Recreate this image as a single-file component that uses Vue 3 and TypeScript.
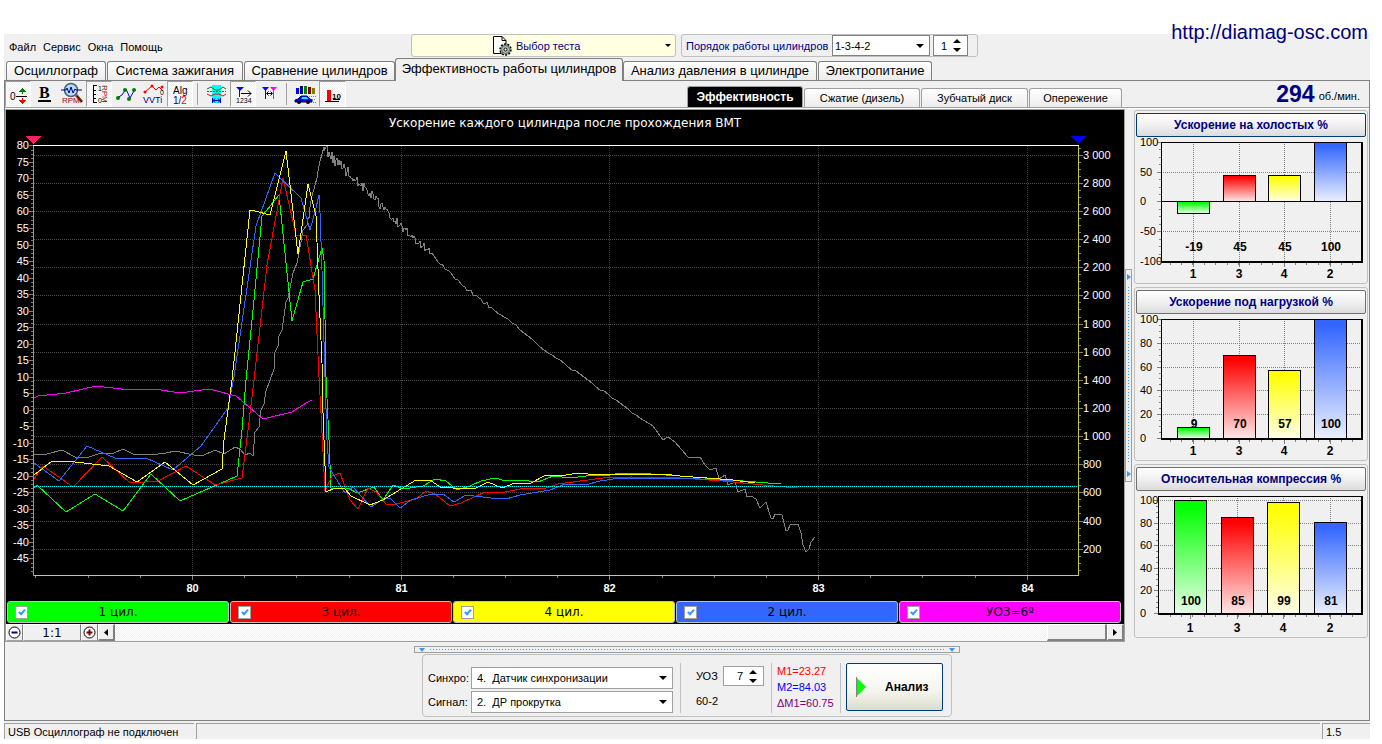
<script setup lang="ts">
import { ref, computed } from 'vue'

type Point = [number, number]

interface Bar { label: string; value: number; color: string; x: number }
interface BarPanel {
  id: string
  title: string
  focused: boolean
  min: number
  max: number
  step: number
  left: number
  bottom: number
  top: number
  bars: Bar[]
}

const menu = ['Файл', 'Сервис', 'Окна', 'Помощь']

const tabs = [
  { name: 'Осциллограф', width: 100 },
  { name: 'Система зажигания', width: 136 },
  { name: 'Сравнение цилиндров', width: 151 },
  { name: 'Эффективность работы цилиндров', width: 228 },
  { name: 'Анализ давления в цилиндре', width: 194 },
  { name: 'Электропитание', width: 114 },
]
const activeTab = ref(3)

const views = [
  { name: 'Эффективность', width: 116 },
  { name: 'Сжатие (дизель)', width: 116 },
  { name: 'Зубчатый диск', width: 107 },
  { name: 'Опережение', width: 93 },
]
const activeView = ref(0)

const firingOrder = ref('1-3-4-2')
const cylinder = ref(1)
const advance = ref(7)
const sync = ref(4)
const signal = ref(2)

const channels = ref([
  { name: '1 цил.', color: 'green', on: true },
  { name: '3 цил.', color: 'red', on: true },
  { name: '4 цил.', color: 'yellow', on: true },
  { name: '2 цил.', color: 'blue', on: true },
  { name: 'УОЗ=6º', color: 'magenta', on: true },
])

/* Main chart axes */
const leftY = (v: number) => Math.round(145.4 + (80 - v) * 3.304) + 0.5
const rightY = (v: number) => Math.round(154.7 + (3000 - v) * 0.1407) + 0.5
const timeX = (t: number) => Math.round(192 + (t - 80) * 208.7) + 0.5

const leftTicks = Array.from({ length: 26 }, (_, i) => 80 - i * 5)
const leftMinor = Array.from({ length: 104 }, (_, i) => 80 - i * 1.25)
const rightTicks = Array.from({ length: 15 }, (_, i) => 3000 - i * 200)
const rightMinor = Array.from({ length: 61 }, (_, i) => 3050 - i * 50)
const timeTicks = [80, 81, 82, 83, 84]
const timeMinor = Array.from({ length: 20 }, (_, i) => 79.25 + i * 0.25)
const thousands = (v: number) => (v >= 1000 ? `${Math.floor(v / 1000)} ${String(v % 1000).padStart(3, '0')}` : String(v))

const path = (pts: Point[]) => pts.map((p) => p.join(',')).join(' ')

const rise: Point[] = [
  [34, 454], [47, 454], [62, 450], [75, 457], [89, 457], [98, 454], [114, 453], [123, 449], [133, 454], [150, 455],
  [166, 453], [175, 451], [194, 455], [202, 456], [215, 450], [224, 454], [235, 447], [240, 449], [245, 455],
  [250, 453], [253, 456], [255, 432], [259, 427], [261, 410], [264, 404], [266, 391], [270, 380], [274, 369],
  [275, 352], [278, 346], [279, 336], [282, 330], [286, 302], [288, 298], [293, 273], [297, 263], [301, 242],
  [303, 230], [307, 225], [307, 219], [310, 217], [309, 212], [312, 196], [317, 178], [318, 171], [320, 161], [324, 147],
]
const slope: Point[] = [
  [324, 148], [333, 158], [348, 172], [362, 185], [382, 207], [402, 227], [425, 248], [445, 267], [455, 279],
  [477, 297], [500, 314], [520, 329], [540, 347], [560, 361], [580, 374], [600, 389], [620, 403], [640, 418],
]
const tail: Point[] = [
  [640, 418], [653, 426], [663, 440], [668, 437], [675, 442], [688, 457], [695, 458], [700, 457], [705, 465],
  [710, 470], [716, 468], [719, 479], [725, 475], [728, 485], [735, 482], [738, 492], [745, 489], [747, 497],
  [751, 496], [756, 499], [760, 508], [766, 502], [771, 518], [773, 519], [775, 514], [782, 515], [786, 531],
  [788, 530], [790, 525], [798, 524], [801, 533], [803, 545], [806, 552], [809, 549], [811, 542], [815, 537],
]

/* Adds measurement ripple to the coasting-down part of the speed curve */
function ripple(base: Point[]): Point[] {
  const out: Point[] = []
  let seed = 17
  for (let i = 0; i < base.length - 1; i++) {
    const [x0, y0] = base[i]
    const [x1, y1] = base[i + 1]
    let x = x0
    while (x < x1) {
      seed = (seed * 1103515245 + 12345) % 2147483648
      const noise = (seed / 2147483648 - 0.5) * 2
      const amp = x < 352 ? 6 : x < 385 ? 5 : x < 430 ? 4 : x < 490 ? 2 : 1
      out.push([x, Math.round(y0 + ((y1 - y0) * (x - x0)) / (x1 - x0) + noise * amp)])
      x += x < 430 ? 1 : x < 490 ? 2 : 4
    }
  }
  return out
}

const speed: Point[] = [...rise, ...ripple(slope), ...tail]

const series = computed(() => [
  { id: 'speed', color: 'gray', on: true, pts: speed },
  { id: 'c1', color: 'green', on: channels.value[0].on, pts: [
    [34, 488], [37, 485], [66, 512], [95, 494], [123, 511], [151, 474], [180, 501], [212, 487], [237, 476], [242, 430],
    [246, 380], [254, 300], [262, 216], [279, 195], [292, 321], [303, 282], [313, 279], [319, 258], [322, 248],
    [324, 260], [326, 377], [329, 440], [331, 488], [338, 488], [348, 488], [357, 493], [374, 487], [383, 500],
    [393, 485], [403, 489], [423, 486], [435, 479], [446, 481], [457, 490], [470, 486], [481, 481], [495, 478],
    [506, 481], [520, 480], [538, 482], [553, 476], [570, 478], [586, 476], [610, 475], [621, 473], [636, 473],
    [680, 476], [730, 480], [781, 484],
  ] as Point[] },
  { id: 'c3', color: 'red', on: channels.value[1].on, pts: [
    [34, 479], [43, 466], [73, 487], [102, 457], [130, 483], [158, 481], [186, 466], [215, 485], [242, 478],
    [248, 430], [254, 380], [267, 265], [283, 178], [296, 235], [306, 235], [315, 290], [319, 377], [321, 413],
    [325, 491], [332, 476], [340, 473], [350, 500], [358, 509], [368, 488], [376, 492], [386, 504], [396, 504],
    [416, 499], [426, 491], [435, 494], [450, 506], [461, 503], [485, 492], [500, 493], [520, 489], [546, 488],
    [558, 484], [603, 478], [631, 477], [680, 478], [723, 481], [763, 485], [797, 488],
  ] as Point[] },
  { id: 'c2', color: 'blue', on: channels.value[3].on, pts: [
    [34, 463], [59, 481], [87, 446], [115, 458], [146, 458], [173, 470], [201, 446], [228, 408], [234, 377],
    [256, 226], [275, 173], [301, 198], [310, 230], [316, 208], [319, 195], [320, 213], [322, 270], [325, 377],
    [327, 440], [329, 467], [333, 474], [345, 493], [353, 487], [371, 507], [383, 499], [390, 498], [400, 508],
    [411, 500], [431, 494], [443, 494], [454, 502], [466, 495], [491, 498], [506, 499], [520, 495], [550, 490],
    [565, 484], [585, 485], [600, 481], [620, 478], [680, 478], [720, 480], [737, 481],
  ] as Point[] },
  { id: 'c4', color: 'yellow', on: channels.value[2].on, pts: [
    [34, 475], [52, 461], [75, 462], [109, 466], [137, 482], [165, 462], [193, 485], [222, 469], [224, 440],
    [228, 410], [232, 380], [250, 210], [255, 211], [270, 215], [286, 151], [298, 254], [308, 184], [316, 216],
    [319, 295], [322, 363], [323, 413], [326, 492], [335, 488], [345, 489], [351, 496], [370, 505], [383, 500],
    [401, 489], [416, 480], [430, 480], [440, 487], [466, 489], [476, 488], [488, 482], [502, 488], [515, 483],
    [531, 483], [544, 476], [566, 475], [578, 473], [588, 474], [663, 474], [680, 476], [733, 480], [755, 483],
  ] as Point[] },
  { id: 'adv', color: 'magenta', on: channels.value[4].on, pts: [
    [34, 398], [38, 396], [66, 393], [96, 386], [121, 389], [155, 389], [180, 393], [209, 389], [236, 396],
    [263, 419], [292, 412], [306, 403], [312, 400],
  ] as Point[] },
].filter((s) => s.on))

/* Bar panels */
const order = ['1', '3', '4', '2']
const palette = ['green', 'red', 'yellow', 'blue']
const makeBars = (values: number[], xs: number[]): Bar[] =>
  values.map((value, i) => ({ label: order[i], value, color: palette[i], x: xs[i] }))

const panels: BarPanel[] = [
  { id: 'idle', title: 'Ускорение на холостых %', focused: true, min: -100, max: 100, step: 50, left: 25, top: 5, bottom: 124, bars: makeBars([-19, 45, 45, 100], [41, 87, 132, 178]) },
  { id: 'load', title: 'Ускорение под нагрузкой %', focused: false, min: 0, max: 100, step: 20, left: 25, top: 5, bottom: 124, bars: makeBars([9, 70, 57, 100], [41, 87, 132, 178]) },
  { id: 'comp', title: 'Относительная компрессия %', focused: false, min: 0, max: 104, step: 20, left: 22, top: 5, bottom: 122, bars: makeBars([100, 85, 99, 81], [38, 85, 131, 178]) },
]
const barY = (p: BarPanel, v: number) => Math.round(p.bottom - ((v - p.min) / (p.max - p.min)) * (p.bottom - p.top) - 0.01)
const barTicks = (p: BarPanel, div = 1) => {
  const out: number[] = []
  for (let v = p.min; v <= p.max; v += p.step / div) out.push(v)
  return out
}
const barTop = (p: BarPanel, b: Bar) => barY(p, Math.max(b.value, 0))
const barHeight = (p: BarPanel, b: Bar) => Math.abs(barY(p, 0) - barY(p, b.value))
const catTicks = Array.from({ length: 17 }, (_, i) => 34 + i * 11.4)
</script>

<template>
  <div class="screen">
    <div class="window">
      <a class="site" href="#">http://diamag-osc.com</a>

      <header class="top">
        <nav class="menu">
          <button v-for="m in menu" :key="m" type="button">{{ m }}</button>
        </nav>
        <button class="test-pick" type="button">
          <svg class="doc" width="20" height="20" viewBox="0 0 20 20">
            <path d="M1.500 .5H10l4 4V17.500H1.500z" fill="#fff" stroke="#000" />
            <path d="M10 .5v4h4" fill="none" stroke="#000" />
            <circle cx="13.500" cy="13.500" r="5.500" fill="#b4c4b4" stroke="#000" stroke-width="1.500" stroke-dasharray="2 1.400" />
            <circle cx="13.500" cy="13.500" r="4" fill="#b4c4b4" stroke="#506050" />
            <circle cx="13.500" cy="13.500" r="1.500" fill="#fff" stroke="#000" />
          </svg>
          <span>Выбор теста</span>
          <svg class="drop" width="6" height="3" viewBox="0 0 6 3"><path d="M0 0h6L3 3z" /></svg>
        </button>
        <div class="order">
          <label for="order">Порядок работы цилиндров</label>
          <span class="combo combo-order">
            <select id="order" v-model="firingOrder"><option>1-3-4-2</option><option>1-2-4-3</option></select>
            <svg width="8" height="4" viewBox="0 0 8 4"><path d="M0 0h8L4 4z" /></svg>
          </span>
          <span class="spin spin-cyl">
            <input v-model.number="cylinder" type="text" aria-label="Цилиндр" />
            <span class="arrows">
              <button type="button" aria-label="Больше" @click="cylinder++"><svg width="8" height="4" viewBox="0 0 8 4"><path d="M0 4h8L4 0z" /></svg></button>
              <button type="button" aria-label="Меньше" @click="cylinder--"><svg width="8" height="4" viewBox="0 0 8 4"><path d="M0 0h8L4 4z" /></svg></button>
            </span>
          </span>
        </div>
      </header>

      <nav class="tabs">
        <button v-for="(t, i) in tabs" :key="t.name" type="button" :class="{ active: i === activeTab }" :style="{ width: t.width + 'px' }" @click="activeTab = i">{{ t.name }}</button>
      </nav>

      <main class="page">
        <div class="toolbar">
          <div class="tools">
            <button type="button" class="tool w26 down" aria-label="Ноль">
              <svg width="24" height="24" viewBox="0 0 24 24" shape-rendering="crispEdges">
                <text class="t10" x="4" y="18">0</text>
                <path d="M10 14.500h11" stroke="#000" />
                <path d="M16.500 12v-3" stroke="#008000" /><path d="M13 10h7l-3.500-4z" fill="#008000" />
                <path d="M16.500 16v3" stroke="#f00" /><path d="M13 18h7l-3.500 4z" fill="#f00" />
              </svg>
            </button>
            <button type="button" class="tool w27" aria-label="Жирный">
              <svg width="24" height="24" viewBox="0 0 24 24">
                <text class="serif-b" x="6" y="16">B</text>
                <path d="M5 18h13v2H5z" />
              </svg>
            </button>
            <button type="button" class="tool w28" aria-label="Обороты, лупа">
              <svg width="24" height="24" viewBox="0 0 24 24">
                <path d="M16 13l6 7" stroke="#8a4b20" stroke-width="3" />
                <path d="M17 14l5 6" stroke="#000" />
                <circle cx="11" cy="8" r="6.500" fill="#b0dcff" stroke="#506070" stroke-width="1.500" />
                <path d="M1 8h5l1-2 2 5 2-6 2 6 2-4 1 1h6" fill="none" stroke="#000080" />
                <text class="t8 dred" x="2" y="21">RPM</text>
              </svg>
            </button>
            <button type="button" class="tool w26 down" aria-label="Шкала оборотов">
              <svg width="24" height="24" viewBox="0 0 24 24">
                <path d="M10 3.500H6.500v17H10M6.500 8H9M6.500 12H9M6.500 16H9" fill="none" stroke="#000" shape-rendering="crispEdges" />
                <text class="t7" x="11" y="9">1</text>
                <text class="t7" x="11" y="21">0</text>
                <text class="t8 dred" transform="translate(15 3) rotate(90)">RPM</text>
              </svg>
            </button>
            <button type="button" class="tool w28" aria-label="Линии">
              <svg width="24" height="24" viewBox="0 0 24 24">
                <path d="M3 16l5-3 4-6 4 9 5-9" fill="none" stroke="#0000e0" />
                <g fill="#008000"><circle cx="4" cy="16" r="2" /><circle cx="11" cy="8" r="2" /><circle cx="15" cy="17" r="2" /><circle cx="20" cy="8" r="2" /></g>
              </svg>
            </button>
            <button type="button" class="tool w27" aria-label="VVTi">
              <svg width="24" height="24" viewBox="0 0 24 24">
                <path d="M3 10l7-6 4 4 3-3 4 4" fill="none" stroke="#f00" />
                <g fill="#f00"><circle cx="3" cy="10" r="1.500" /><circle cx="10" cy="4" r="1.500" /><circle cx="20" cy="5" r="1.500" /></g>
                <text class="t7" x="18" y="13">0</text>
                <text class="t9 navy" x="1" y="21">VVTi</text>
              </svg>
            </button>
            <button type="button" class="tool w26 down" aria-label="Алгоритм 1/2">
              <svg width="24" height="24" viewBox="0 0 24 24">
                <text class="t10" x="5" y="12">Alg</text>
                <text class="t10" x="5" y="22"><tspan fill="#000080">1/</tspan><tspan fill="#ff0000">2</tspan></text>
              </svg>
            </button>
            <i class="tool-sep"></i>
            <button type="button" class="tool w28" aria-label="Сигналы">
              <svg width="24" height="24" viewBox="0 0 24 24">
                <path d="M8 3h9v18H8z" fill="#00ffff" />
                <path d="M3 7l4-2 4 3h4l4-3 3 2" fill="none" stroke="#008000" />
                <path d="M3 9.500h19" stroke="#008000" stroke-dasharray="2 1" />
                <path d="M3 12l4 2 4-2h4l4 2 3-2" fill="none" stroke="#f00" />
                <path d="M8.500 16v5M16.500 16v5M9 18.500h8M11 16.500l-2 2 2 2M14 16.500l2 2-2 2" fill="none" stroke="#0000c0" />
              </svg>
            </button>
            <button type="button" class="tool w26 down" aria-label="Маркеры 1234">
              <svg width="24" height="24" viewBox="0 0 24 24">
                <path d="M5 5h8L9 9z" fill="#00f" /><path d="M8.500 7v8" stroke="#00f" />
                <path d="M10 11.500h10M17 8.500l3 3-3 3" fill="none" stroke="#000" />
                <text class="t7" x="5" y="21">1234</text>
              </svg>
            </button>
            <button type="button" class="tool w26" aria-label="Интервал">
              <svg width="24" height="24" viewBox="0 0 24 24">
                <path d="M5 5h7L8.500 9z" fill="#00f" /><path d="M8.500 7v10" stroke="#00f" />
                <path d="M13 5h7l-3.500 4z" fill="#f0f" /><path d="M16.500 7v10" stroke="#f0f" />
                <path d="M10 11.500h5M11.500 9.500l-2 2 2 2M13.500 9.500l2 2-2 2" fill="none" stroke="#000" />
              </svg>
            </button>
            <i class="tool-sep"></i>
            <button type="button" class="tool w28" aria-label="Динамика">
              <svg width="24" height="24" viewBox="0 0 24 24">
                <g shape-rendering="crispEdges"><path d="M3 6h3v6H3z" fill="#00f" /><path d="M7 4h3v8H7z" fill="#000080" /><path d="M11 4h3v8h-3z" fill="#008000" /><path d="M15 5h3v7h-3z" fill="#800000" /><path d="M19 6h3v6h-3z" fill="#808000" /></g>
                <path d="M2 18l3-1 3-3h6l3 3 2 1v2H2z" fill="#00f" stroke="#000080" />
                <path d="M8 17l1.500-2h4l2 2z" fill="#00ffff" />
                <circle cx="6" cy="20" r="2" fill="#000" /><circle cx="15" cy="20" r="2" fill="#000" />
                <path d="M16 14.500h7M19 17.500h4M20 20.500h3" stroke="#808080" stroke-dasharray="1 1" />
              </svg>
            </button>
            <button type="button" class="tool w27 down" aria-label="Гистограмма">
              <svg width="24" height="24" viewBox="0 0 24 24" shape-rendering="crispEdges">
                <path d="M6 8h4v11H6z" fill="#f00" />
                <path d="M4 19.500h14M12 17.500h7" stroke="#000" />
                <text class="t8 bold" x="11" y="17">10</text>
              </svg>
            </button>
            <nav class="views">
              <button v-for="(v, i) in views" :key="v.name" type="button" :class="{ active: i === activeView }" :style="{ width: v.width + 'px' }" @click="activeView = i">{{ v.name }}</button>
            </nav>
          </div>
          <div class="rpm"><b>294</b><span>об./мин.</span></div>
        </div>

        <div class="work">
          <section class="scope">
            <svg class="plot" viewBox="6 110 1118 490">
              <text class="title" x="565" y="127" text-anchor="middle">Ускорение каждого цилиндра после прохождения ВМТ</text>
              <g class="grid" shape-rendering="crispEdges">
                <line v-for="v in rightTicks" :key="'h' + v" x1="34" x2="1078" :y1="rightY(v)" :y2="rightY(v)" />
                <line v-for="t in timeTicks" :key="'v' + t" class="vert" y1="146" y2="575" :x1="timeX(t)" :x2="timeX(t)" />
              </g>
              <g class="curves" shape-rendering="crispEdges">
                <polyline v-for="s in series" :key="s.id" :class="'line-' + s.color" :points="path(s.pts)" />
                <path class="level" d="M34 486.500H1078" />
              </g>
              <g shape-rendering="crispEdges">
                <g class="ticks">
                  <line v-for="v in leftTicks" :key="'l' + v" x1="29" x2="33" :y1="leftY(v)" :y2="leftY(v)" />
                  <line v-for="v in leftMinor" :key="'lm' + v" x1="31" x2="33" :y1="leftY(v)" :y2="leftY(v)" />
                  <line v-for="v in rightTicks" :key="'r' + v" x1="1079" x2="1083" :y1="rightY(v)" :y2="rightY(v)" />
                  <line v-for="v in rightMinor" :key="'rm' + v" x1="1079" x2="1081" :y1="rightY(v)" :y2="rightY(v)" />
                  <line v-for="t in timeTicks" :key="'t' + t" y1="576" y2="580" :x1="timeX(t)" :x2="timeX(t)" />
                  <line v-for="t in timeMinor" :key="'tm' + t" y1="576" y2="578" :x1="timeX(t)" :x2="timeX(t)" />
                </g>
                <path d="M33 145.500H1079" stroke="#fff" />
                <path d="M33 575.500H1079" stroke="#c0c0c0" />
                <path d="M33.500 146V576" stroke="#40c890" />
                <path d="M1078.500 146V576" stroke="#c8c840" />
                <path d="M25 136h16l-8 8z" fill="#ff2060" />
                <path d="M1070 136h16l-8 8z" fill="#0000ff" />
              </g>
              <g class="axis">
                <text v-for="v in leftTicks" :key="v" x="29" :y="leftY(v) + 3" text-anchor="end">{{ v }}</text>
                <text v-for="v in rightTicks" :key="'x' + v" x="1083" :y="rightY(v) + 3">{{ thousands(v) }}</text>
              </g>
              <g class="axis bold">
                <text v-for="t in timeTicks" :key="t" :x="timeX(t)" y="592" text-anchor="middle">{{ t }}</text>
              </g>
            </svg>

            <div class="legend">
              <label v-for="c in channels" :key="c.name" :class="'bg-' + c.color">
                <input v-model="c.on" type="checkbox" />
                <span>{{ c.name }}</span>
              </label>
            </div>

            <div class="scroll">
              <button type="button" class="sb" aria-label="Уменьшить"><svg width="13" height="13" viewBox="0 0 13 13"><circle cx="6.500" cy="6.500" r="5.500" fill="#fff" stroke="#000" /><path d="M3.500 6.500h6" stroke="#000080" stroke-width="2" /></svg></button>
              <button type="button" class="ratio">1:1</button>
              <button type="button" class="sb" aria-label="Увеличить"><svg width="13" height="13" viewBox="0 0 13 13"><circle cx="6.500" cy="6.500" r="5.500" fill="#fff" stroke="#000" /><path d="M3.500 6.500h6M6.500 3.500v6" stroke="#800000" stroke-width="2" /></svg></button>
              <button type="button" class="sb raised" aria-label="Влево"><svg width="4" height="7" viewBox="0 0 4 7"><path d="M4 0v7L0 3.500z" /></svg></button>
              <div class="track"><div class="thumb"></div></div>
              <button type="button" class="sb raised" aria-label="Вправо"><svg width="4" height="7" viewBox="0 0 4 7"><path d="M0 0v7l4-3.500z" /></svg></button>
            </div>
          </section>

          <div class="vsplit">
            <svg width="4" height="6" viewBox="0 0 4 6"><path d="M0 0v6l4-3z" /></svg>
            <i></i>
            <svg width="4" height="6" viewBox="0 0 4 6"><path d="M0 0v6l4-3z" /></svg>
          </div>

          <aside class="panels">
            <section v-for="p in panels" :key="p.id" class="panel">
              <button type="button" :class="{ focused: p.focused }">{{ p.title }}</button>
              <svg viewBox="0 0 230 146">
                <defs>
                  <linearGradient v-for="b in p.bars" :id="p.id + b.color" :key="b.color" x1="0" y1="0" x2="0" y2="1">
                    <stop offset="0.050" :class="'stop-' + b.color" />
                    <stop offset="1" :class="'stop-end-' + b.color" />
                  </linearGradient>
                </defs>
                <g shape-rendering="crispEdges">
                  <g class="bar-grid">
                    <line v-for="v in barTicks(p)" :key="v" :x1="p.left" x2="226" :y1="barY(p, v) + 0.5" :y2="barY(p, v) + 0.5" />
                    <line v-for="b in p.bars" :key="b.label" :x1="b.x + 16.5" :x2="b.x + 16.5" :y1="p.top" :y2="p.bottom" />
                  </g>
                  <g class="bar-ticks">
                    <line v-for="v in barTicks(p)" :key="v" :x1="p.left - 4" :x2="p.left" :y1="barY(p, v) + 0.5" :y2="barY(p, v) + 0.5" />
                    <line v-for="v in barTicks(p, 4)" :key="'m' + v" :x1="p.left - 2" :x2="p.left" :y1="barY(p, v) + 0.5" :y2="barY(p, v) + 0.5" />
                    <line v-for="x in catTicks" :key="'c' + x" :x1="x" :x2="x" :y1="p.bottom + 2" :y2="p.bottom + 4" />
                    <line v-for="b in p.bars" :key="'b' + b.label" :x1="b.x + 16.5" :x2="b.x + 16.5" :y1="p.bottom + 2" :y2="p.bottom + 6" />
                  </g>
                  <line :x1="p.left" x2="226" :y1="barY(p, 0) + 0.5" :y2="barY(p, 0) + 0.5" stroke="#000" />
                  <rect v-for="b in p.bars" :key="b.label" :x="b.x + 0.5" :y="barTop(p, b) + 0.5" width="32" :height="barHeight(p, b)" :fill="`url(#${p.id}${b.color})`" stroke="#000" />
                  <path :d="`M${p.left} ${p.top + 0.5}H226`" stroke="#000" />
                  <path :d="`M${p.left + 0.5} ${p.top}V${p.bottom}`" stroke="#000" />
                  <path :d="`M226 ${p.top}V${p.bottom + 2}M${p.left} ${p.bottom + 1}H226`" stroke="#000" stroke-width="2" />
                </g>
                <g class="bar-axis">
                  <text v-for="v in barTicks(p)" :key="v" x="4" :y="barY(p, v) + 4">{{ v }}</text>
                </g>
                <g class="bar-values">
                  <text v-for="b in p.bars" :key="b.label" :x="b.x + 17" y="114">{{ b.value }}</text>
                  <text v-for="b in p.bars" :key="'l' + b.label" :x="b.x + 16" y="141">{{ b.label }}</text>
                </g>
              </svg>
            </section>
          </aside>
        </div>

        <div class="hsplit">
          <svg width="6" height="4" viewBox="0 0 6 4"><path d="M0 0h6L3 4z" /></svg>
          <i></i>
          <svg width="6" height="4" viewBox="0 0 6 4"><path d="M0 0h6L3 4z" /></svg>
        </div>

        <form class="controls" @submit.prevent>
          <div class="fields">
            <label for="sync">Синхро:</label>
            <span class="combo">
              <select id="sync" v-model="sync"><option :value="4">4.&nbsp; Датчик синхронизации</option></select>
              <svg width="8" height="4" viewBox="0 0 8 4"><path d="M0 0h8L4 4z" /></svg>
            </span>
            <label for="signal">Сигнал:</label>
            <span class="combo">
              <select id="signal" v-model="signal"><option :value="2">2.&nbsp; ДР прокрутка</option></select>
              <svg width="8" height="4" viewBox="0 0 8 4"><path d="M0 0h8L4 4z" /></svg>
            </span>
          </div>
          <i class="rule"></i>
          <div class="advance">
            <div class="advance-row">
              <label for="advance">УОЗ</label>
              <span class="spin">
                <input id="advance" v-model.number="advance" type="text" />
                <span class="arrows">
                  <button type="button" aria-label="Больше" @click="advance++"><svg width="8" height="4" viewBox="0 0 8 4"><path d="M0 4h8L4 0z" /></svg></button>
                  <button type="button" aria-label="Меньше" @click="advance--"><svg width="8" height="4" viewBox="0 0 8 4"><path d="M0 0h8L4 4z" /></svg></button>
                </span>
              </span>
            </div>
            <span>60-2</span>
          </div>
          <i class="rule"></i>
          <div class="marks">
            <span class="m-red">M1=23.27</span>
            <span class="m-blue">M2=84.03</span>
            <span class="m-purple">ΔM1=60.75</span>
          </div>
          <i class="rule"></i>
          <button class="analyze" type="submit">
            <svg width="11" height="20" viewBox="0 0 11 20"><path d="M1 1l9 9-9 9z" fill="#00ff00" /><path d="M.5 0v20" stroke="#808080" /></svg>
            <span>Анализ</span>
          </button>
        </form>
      </main>

      <footer class="status">
        <span class="s-main">USB Осциллограф не подключен</span>
        <span class="s-mid"></span>
        <span class="s-ver">1.5</span>
      </footer>
    </div>
  </div>
</template>

<style>
body {
  background: #fff;
}
</style>

<style scoped>
.screen {
  padding: 34px 12px 5px 4px;
  font-family: "Liberation Sans", Arial, sans-serif;
  font-size: 11px;
  color: #000;
}
.screen *,
.screen *::before {
  box-sizing: border-box;
}
button,
input,
select {
  font: inherit;
  color: inherit;
  margin: 0;
  padding: 0;
  border: 0;
  background: none;
  border-radius: 0;
}
svg {
  display: block;
}
.window {
  position: relative;
  background: #f0f0f0;
}
.site {
  position: absolute;
  top: -14px;
  right: 2px;
  font-size: 20px;
  line-height: 24px;
  color: #000080;
  text-decoration: none;
}

/* header */
.top {
  display: flex;
  height: 24px;
}
.menu {
  flex: 0 0 407px;
  display: flex;
  gap: 7px;
  padding: 2px 0 0 5px;
  align-items: center;
}
.test-pick {
  flex: 0 0 265px;
  height: 23px;
  display: flex;
  align-items: center;
  border: 1px solid #c0c0c0;
  border-radius: 3px;
  background: #ffffe1;
  color: #000080;
  padding: 0 4px 0 80px;
  gap: 4px;
}
.drop {
  margin-left: auto;
}
.order {
  height: 23px;
  margin-left: 5px;
  width: 297px;
  display: flex;
  align-items: center;
  border: 1px solid #c0c0c0;
  border-radius: 3px;
  color: #000080;
  padding-left: 4px;
}
.order label {
  width: 146px;
  white-space: nowrap;
}
.combo {
  position: relative;
  display: block;
  height: 22px;
  color: #000;
}
.combo select {
  appearance: none;
  width: 100%;
  height: 100%;
  padding: 0 20px 0 5px;
  border: 1px solid #a0a0a0;
  background: #fff;
}
.combo svg {
  position: absolute;
  right: 6px;
  top: 9px;
  pointer-events: none;
}
.combo-order {
  width: 98px;
  height: 21px;
}
.combo-order select {
  padding-left: 2px;
  border-color: #808080;
}
.spin {
  display: flex;
  width: 41px;
  height: 20px;
  border: 1px solid #a0a0a0;
  background: #fff;
  color: #000;
}
.spin input {
  flex: 1;
  min-width: 0;
  text-align: right;
}
.spin-cyl {
  width: 35px;
  height: 21px;
  margin-left: 3px;
  border-color: #808080;
}
.arrows {
  flex: 0 0 20px;
  display: flex;
  flex-direction: column;
  justify-content: center;
  align-items: center;
  gap: 5px;
}

/* tabs */
.tabs {
  display: flex;
  align-items: flex-end;
  gap: 1px;
  height: 22px;
  padding-left: 2px;
}
.tabs button {
  height: 19px;
  border: 1px solid #808080;
  border-bottom: 0;
  border-radius: 3px 3px 0 0;
  background: linear-gradient(#fff, #ececec);
  font-size: 13px;
  line-height: 16px;
  white-space: nowrap;
}
.tabs .active {
  height: 23px;
  margin: 0 -1px -1px;
  position: relative;
  background: #f0f0f0;
  padding-bottom: 2px;
}
.page {
  border: 1px solid #808080;
}
.toolbar,
.work {
  display: grid;
  grid-template-columns: minmax(0, 1fr) 244px;
}
.toolbar {
  height: 28px;
  border-bottom: 1px solid #fff;
}
.toolbar > * {
  border-bottom: 1px solid #a0a0a0;
}
.tools {
  display: flex;
}
.tool {
  display: flex;
  justify-content: center;
  align-items: center;
  height: 26px;
}
.w26 { width: 26px; }
.w27 { width: 27px; }
.w28 { width: 28px; }
.down {
  border: 1px solid #a0a0a0;
  border-right-color: #fff;
  border-bottom-color: #fff;
  background: repeating-conic-gradient(#fff 0 25%, #f0f0f0 0 50%) 0 0 / 2px 2px;
}
.tool-sep {
  width: 1px;
  height: 22px;
  margin: 2px 4px 0 4px;
  background: #a0a0a0;
}
.t7 { font: 7px "Liberation Sans", sans-serif; }
.t8 { font: 8px "Liberation Sans", sans-serif; }
.t9 { font: 9px "Liberation Sans", sans-serif; }
.t10 { font: 10px "Liberation Sans", sans-serif; }
.bold { font-weight: bold; }
.serif-b { font: bold 16px "Liberation Serif", serif; }
.dred { fill: #a00000; }
.navy { fill: #000080; }
.views {
  display: flex;
  align-items: flex-end;
  gap: 1px;
  margin-left: auto;
  padding-right: 3px;
}
.views button {
  height: 19px;
  border: 1px solid #a0a0a0;
  border-bottom: 0;
  border-radius: 3px 3px 0 0;
  background: linear-gradient(#fff, #ececec);
  white-space: nowrap;
}
.views .active {
  height: 21px;
  background: #000;
  color: #fff;
  font-weight: bold;
  font-size: 12px;
}
.rpm {
  display: flex;
  justify-content: flex-end;
  align-items: center;
  gap: 4px;
  padding-right: 9px;
}
.rpm b {
  font-size: 23px;
  line-height: 24px;
  color: #000080;
}
.rpm span {
  padding-top: 3px;
}

/* chart */
.work {
  grid-template-columns: minmax(0, 1fr) 7px 234px;
  column-gap: 2px;
  padding-right: 1px;
}
.scope {
  margin-right: -2px;
  border: 1px solid #a0a0a0;
}
.plot {
  width: 100%;
  background: #000;
}
.title {
  font: 12px "DejaVu Sans", Verdana, sans-serif;
  fill: #fff;
}
.grid line {
  stroke: #505050;
  stroke-dasharray: 1 1;
}
.grid .vert {
  stroke: #3c3c3c;
}
.curves {
  fill: none;
}
.line-gray { stroke: #808080; }
.line-green { stroke: #00ff00; }
.line-red { stroke: #ff0000; }
.line-yellow { stroke: #ffff00; }
.line-blue { stroke: #3366ff; }
.line-magenta { stroke: #ff00ff; }
.level {
  stroke: #00ffff;
  stroke-dasharray: 1 1;
}
.ticks {
  stroke: #808080;
}
.axis {
  font-size: 11px;
  fill: #fff;
}
.legend {
  display: flex;
  gap: 1px;
  height: 24px;
  padding: 1px 3px 1px 1px;
  background: #000;
}
.legend label {
  flex: 1;
  display: flex;
  align-items: center;
  border: 1px solid #c0c0c0;
  border-radius: 3px;
  padding: 0 20px 0 7px;
  font: 12px "DejaVu Sans", Verdana, sans-serif;
}
.legend span {
  flex: 1;
  text-align: center;
}
.legend input {
  appearance: none;
  position: relative;
  width: 13px;
  height: 13px;
  border: 1px solid #a0a0a0;
  background: #fff;
}
.legend input:checked::before {
  content: "";
  position: absolute;
  left: 4px;
  top: 1px;
  width: 4px;
  height: 7px;
  border: solid #3399ff;
  border-width: 0 2px 2px 0;
  transform: rotate(42deg);
}
.bg-green { background: #00ff00; }
.bg-red { background: #ff0000; }
.bg-yellow { background: #ffff00; }
.bg-blue { background: #3366ff; }
.bg-magenta { background: #ff00ff; }

.scroll {
  display: flex;
  height: 17px;
}
.sb {
  flex: 0 0 17px;
  display: flex;
  align-items: center;
  justify-content: center;
  border: 1px solid #fff;
  border-right-color: #808080;
  border-bottom-color: #a0a0a0;
  background: #f0f0f0;
}
.raised {
  border-width: 1px 2px 2px 1px;
  border-bottom-color: #808080;
}
.ratio {
  flex: 0 0 58px;
  border: 1px solid #fff;
  border-right-color: #808080;
  border-bottom-color: #a0a0a0;
  font: 12px "DejaVu Sans", Verdana, sans-serif;
}
.track {
  flex: 1;
  display: flex;
  justify-content: flex-end;
  background: repeating-conic-gradient(#fff 0 25%, #f0f0f0 0 50%) 0 0 / 2px 2px;
}
.thumb {
  width: 60px;
  background: #f0f0f0;
  border: 1px solid #fff;
  border-right: 2px solid #808080;
  border-bottom: 2px solid #808080;
}

/* splitters */
.vsplit {
  align-self: center;
  display: flex;
  flex-direction: column;
  align-items: center;
  justify-content: space-between;
  height: 213px;
  margin-bottom: 1px;
  padding: 4px 0;
  border: 1px solid #a0a0a0;
  fill: #3399ff;
}
.vsplit i {
  width: 1px;
  height: 176px;
  background: repeating-linear-gradient(#3399ff 0 1px, transparent 1px 3px);
}
.hsplit {
  display: flex;
  align-items: center;
  justify-content: space-between;
  width: 546px;
  height: 7px;
  margin: 4px auto 1px;
  padding: 0 4px;
  border: 1px solid #a0a0a0;
  fill: #3399ff;
}
.hsplit i {
  flex: 1;
  margin: 0 5px;
  height: 1px;
  background: repeating-linear-gradient(90deg, #3399ff 0 1px, transparent 1px 3px);
}

/* bar panels */
.panels {
  display: flex;
  flex-direction: column;
  gap: 3px;
  padding-top: 1px;
}
.panel {
  border: 1px solid #c0c0c0;
  border-radius: 3px;
  padding: 2px 1px 0;
}
.panel button {
  display: block;
  width: 100%;
  height: 24px;
  border: 1px solid #707070;
  border-radius: 2px;
  background: linear-gradient(#fff, #f0f0f0 50%, #dcdcdc);
  color: #000080;
  font-size: 12px;
  font-weight: bold;
}
.panel .focused {
  border-color: #003c74;
}
.bar-grid {
  stroke: #808080;
  stroke-dasharray: 1 1;
}
.bar-ticks {
  stroke: #808080;
}
.bar-axis {
  font-size: 11px;
}
.bar-values {
  font-size: 12px;
  font-weight: bold;
  text-anchor: middle;
}
.stop-green { stop-color: #00ff00; }
.stop-red { stop-color: #ff0000; }
.stop-yellow { stop-color: #ffff00; }
.stop-blue { stop-color: #3366ff; }
.stop-end-green { stop-color: #e6ffe6; }
.stop-end-red { stop-color: #ffe6e6; }
.stop-end-yellow { stop-color: #ffffe6; }
.stop-end-blue { stop-color: #ebf0ff; }

/* lower controls */
.controls {
  display: flex;
  width: 530px;
  height: 63px;
  margin: 0 auto 3px;
  padding-left: 5px;
  border: 1px solid #c0c0c0;
  border-radius: 4px;
}
.fields {
  display: grid;
  grid-template-columns: 43px 202px;
  grid-auto-rows: 22px;
  row-gap: 2px;
  align-items: center;
  padding-top: 12px;
}
.rule {
  width: 1px;
  height: 50px;
  margin: 8px 0 0 7px;
  background: #c0c0c0;
}
.advance {
  display: flex;
  flex-direction: column;
  gap: 9px;
  width: 83px;
  padding: 11px 0 0 15px;
}
.advance-row {
  display: flex;
  align-items: center;
  justify-content: space-between;
}
.marks {
  display: flex;
  flex-direction: column;
  width: 58px;
  margin-left: 5px;
  padding-top: 8px;
  line-height: 16px;
}
.marks + .rule {
  margin-left: 5px;
}
.m-red { color: #ff0000; }
.m-blue { color: #0000ff; }
.m-purple { color: #800080; }
.analyze {
  display: flex;
  align-items: center;
  gap: 18px;
  width: 97px;
  height: 48px;
  margin: 8px 0 0 5px;
  padding-left: 9px;
  border: 1px solid #003c74;
  border-radius: 2px;
  background: linear-gradient(#fff, #f4f4ee 60%, #dcdccc);
  font-size: 12px;
  font-weight: bold;
}

/* status bar */
.status {
  display: flex;
  gap: 2px;
  height: 18px;
  padding-top: 2px;
}
.status span {
  border: 1px solid #a0a0a0;
  border-width: 1px 0 0 1px;
  padding: 0 0 0 3px;
  line-height: 16px;
}
.s-main {
  width: 190px;
}
.s-mid {
  flex: 1;
}
.s-ver {
  width: 48px;
}
</style>
